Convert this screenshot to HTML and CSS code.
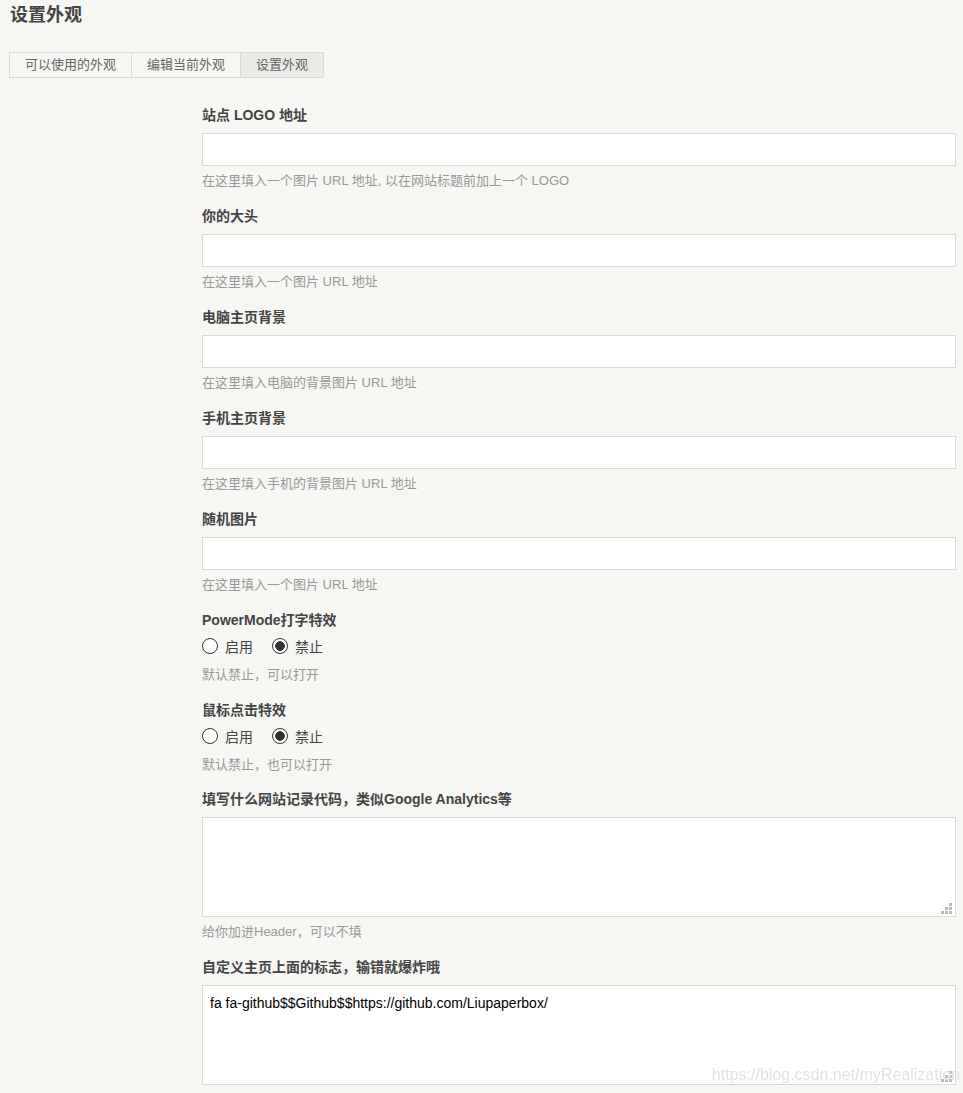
FILE: index.html
```html
<!DOCTYPE html>
<html lang="zh-CN">
<head>
    <meta charset="UTF-8">
    <meta name="viewport" content="width=device-width, initial-scale=1.0">
    <title>设置外观</title>
    <link rel="stylesheet" href="styles.css">
</head>
<body>
    <div class="main">
        <h2 class="page-title">设置外观</h2>

        <ul class="option-tabs">
            <li><a href="#">可以使用的外观</a></li>
            <li><a href="#">编辑当前外观</a></li>
            <li class="current"><a href="#">设置外观</a></li>
        </ul>

        <form class="theme-config">
            <div class="option">
                <label class="option-label">站点 LOGO 地址</label>
                <input type="text" class="text">
                <p class="description">在这里填入一个图片 URL 地址, 以在网站标题前加上一个 LOGO</p>
            </div>
            <div class="option">
                <label class="option-label">你的大头</label>
                <input type="text" class="text">
                <p class="description">在这里填入一个图片 URL 地址</p>
            </div>
            <div class="option">
                <label class="option-label">电脑主页背景</label>
                <input type="text" class="text">
                <p class="description">在这里填入电脑的背景图片 URL 地址</p>
            </div>
            <div class="option">
                <label class="option-label">手机主页背景</label>
                <input type="text" class="text">
                <p class="description">在这里填入手机的背景图片 URL 地址</p>
            </div>
            <div class="option">
                <label class="option-label">随机图片</label>
                <input type="text" class="text">
                <p class="description">在这里填入一个图片 URL 地址</p>
            </div>

            <div class="option">
                <label class="option-label">PowerMode打字特效</label>
                <div class="radios">
                    <label><input type="radio" name="powermode" value="1"> 启用</label>
                    <label><input type="radio" name="powermode" value="0" checked> 禁止</label>
                </div>
                <p class="description radio-desc">默认禁止，可以打开</p>
            </div>
            <div class="option option-last-radio">
                <label class="option-label">鼠标点击特效</label>
                <div class="radios">
                    <label><input type="radio" name="clickfx" value="1"> 启用</label>
                    <label><input type="radio" name="clickfx" value="0" checked> 禁止</label>
                </div>
                <p class="description radio-desc">默认禁止，也可以打开</p>
            </div>

            <div class="option">
                <label class="option-label">填写什么网站记录代码，类似Google Analytics等</label>
                <div class="area-wrap">
                    <textarea></textarea>
                    <svg class="grip" width="11" height="11" viewBox="0 0 11 11">
                        <rect x="8" y="0" width="3" height="3"/>
                        <rect x="4" y="4" width="3" height="3"/>
                        <rect x="8" y="4" width="3" height="3"/>
                        <rect x="0" y="8" width="3" height="3"/>
                        <rect x="4" y="8" width="3" height="3"/>
                        <rect x="8" y="8" width="3" height="3"/>
                    </svg>
                </div>
                <p class="description">给你加进Header，可以不填</p>
            </div>
            <div class="option">
                <label class="option-label">自定义主页上面的标志，输错就爆炸哦</label>
                <div class="area-wrap">
                    <textarea>fa fa-github$$Github$$https://github.com/Liupaperbox/</textarea>
                    <svg class="grip" width="11" height="11" viewBox="0 0 11 11">
                        <rect x="8" y="0" width="3" height="3"/>
                        <rect x="4" y="4" width="3" height="3"/>
                        <rect x="8" y="4" width="3" height="3"/>
                        <rect x="0" y="8" width="3" height="3"/>
                        <rect x="4" y="8" width="3" height="3"/>
                        <rect x="8" y="8" width="3" height="3"/>
                    </svg>
                </div>
            </div>
        </form>
    </div>

    <div class="watermark">https://blog.csdn.net/myRealization</div>
</body>
</html>
```

FILE: styles.css
```css
html, body {
    margin: 0;
    padding: 0;
}
body {
    font-family: "Liberation Sans", Arial, "Noto Sans CJK SC", sans-serif;
    background-color: #F6F6F3;
    color: #444;
    font-size: 13px;
}
.main {
    padding: 0 7px 0 10px;
}
.page-title {
    margin: 0;
    font-size: 18px;
    line-height: 30px;
    font-weight: bold;
    color: #444;
}
.option-tabs {
    list-style: none;
    margin: 22px 0 0 -1px;
    padding: 0;
    display: flex;
}
.option-tabs li {
    border: 1px solid #D9D9D6;
    margin-right: -1px;
}
.option-tabs a {
    display: block;
    padding: 0 15px;
    line-height: 24px;
    color: #666;
    text-decoration: none;
    font-size: 13px;
}
.option-tabs li.current {
    background: #E9E9E6;
}
.theme-config {
    margin: 27px 0 0 192px;
}
.option {
    margin-bottom: 15px;
}
.option-last-radio {
    margin-bottom: 14px;
}
.option-label {
    display: block;
    font-size: 14px;
    font-weight: bold;
    line-height: 20px;
    color: #444;
    margin-bottom: 8px;
}
.text {
    display: block;
    box-sizing: border-box;
    width: 100%;
    height: 33px;
    margin: 0;
    padding: 5px 8px;
    background: #fff;
    border: 1px solid #D9D9D6;
    border-radius: 0;
    font-size: 14px;
    outline: none;
}
.description {
    margin: 5px 0 0;
    line-height: 20px;
    color: #999;
    font-size: 13px;
}
.radios {
    display: flex;
    gap: 19px;
    margin-top: -1px;
    line-height: 20px;
    font-size: 14px;
    color: #444;
}
.radios label {
    display: flex;
    align-items: center;
    gap: 7px;
}
.radios input {
    appearance: none;
    -webkit-appearance: none;
    width: 16px;
    height: 16px;
    margin: 0;
    box-sizing: border-box;
    border: 1.5px solid #333;
    border-radius: 50%;
    background: #fff;
    position: relative;
    top: -1px;
}
.radios input:checked {
    background: radial-gradient(circle, #333 0 4.5px, #fff 5px);
}
.radio-desc {
    margin-top: 8px;
}
.area-wrap {
    position: relative;
}
.area-wrap textarea {
    display: block;
    box-sizing: border-box;
    width: 100%;
    height: 100px;
    margin: 0;
    padding: 8px 7px;
    background: #fff;
    border: 1px solid #D9D9D6;
    border-radius: 0;
    font-family: "Liberation Sans", Arial, "Noto Sans CJK SC", sans-serif;
    font-size: 14px;
    line-height: 18px;
    color: #000;
    resize: none;
    outline: none;
}
.grip {
    position: absolute;
    right: 4px;
    bottom: 3px;
    fill: #bbb;
}
/* blog watermark, bottom-right corner */
.watermark {
    position: fixed;
    right: 3px;
    top: 1065px;
    font-family: "Liberation Sans", Arial, sans-serif;
    font-size: 16px;
    line-height: 20px;
    color: #e2e2e2;
    white-space: nowrap;
}
```
